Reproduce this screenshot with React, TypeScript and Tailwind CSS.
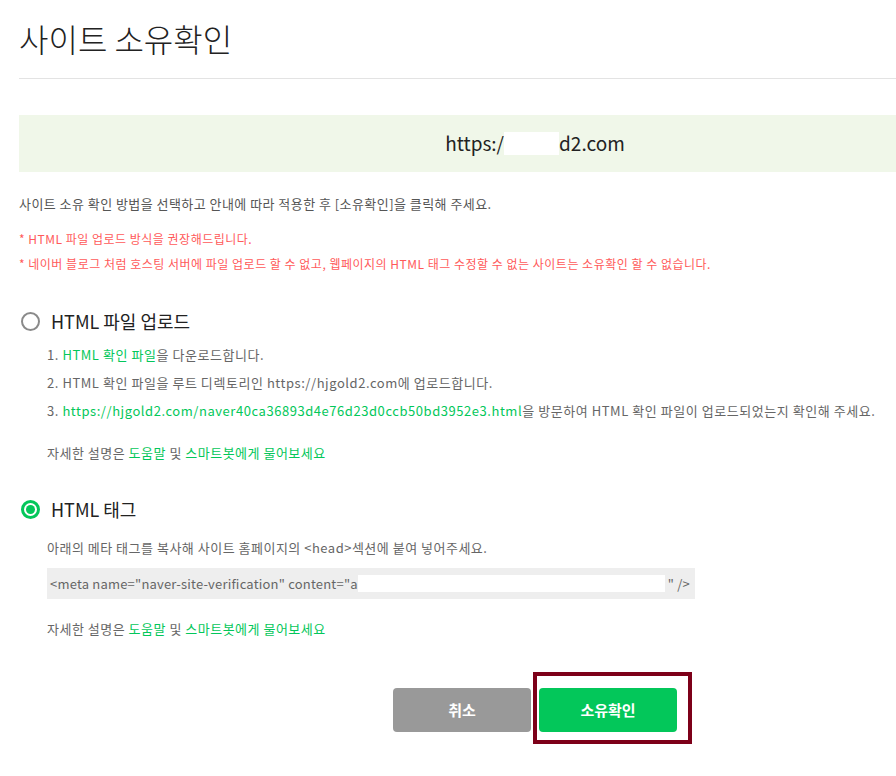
const green = "text-[#03c75a]"

function Radio({ checked }: { checked?: boolean }) {
  return checked ? (
    <span className="flex h-[19px] w-[19px] shrink-0 items-center justify-center rounded-full border-[3px] border-[#03c75a]">
      <span className="h-[9px] w-[9px] rounded-full bg-[#03c75a]" />
    </span>
  ) : (
    <span className="h-[19px] w-[19px] shrink-0 rounded-full border-2 border-[#8a8a8a]" />
  )
}

function HelpLine() {
  return (
    <p className="text-[13px] leading-[20px] tracking-[0.5px] text-[#666]">
      자세한 설명은 <span className={green}>도움말</span> 및{" "}
      <span className={green}>스마트봇에게 물어보세요</span>
    </p>
  )
}

export default function App() {
  return (
    <div className="h-[776px] w-[896px] overflow-hidden bg-white font-['Noto_Sans_CJK_KR','Noto_Sans',sans-serif]">
      <div className="ml-[19px] w-[1032px]">
        <h1 className="pt-[16px] text-[32px] font-light leading-[44px] text-[#222]">사이트 소유확인</h1>
        <div className="mt-[18px] border-t border-[#e3e3e3]" />

        <div className="mt-[36px] flex h-[57px] items-center justify-center bg-[#f0f7e9] text-[19px] text-[#222]">
          <span>https:/</span>
          <span className="inline-block h-[23px] w-[55px] bg-white" />
          <span>d2.com</span>
        </div>

        <p className="mt-[22px] text-[13px] leading-[20px] tracking-[0.45px] text-[#555]">
          사이트 소유 확인 방법을 선택하고 안내에 따라 적용한 후 [소유확인]을 클릭해 주세요.
        </p>
        <div className="mt-[15px] space-y-[5px] text-[12px] leading-[20px] tracking-[0.5px] text-[#ff5a5a]">
          <p>* HTML 파일 업로드 방식을 권장해드립니다.</p>
          <p>* 네이버 블로그 처럼 호스팅 서버에 파일 업로드 할 수 없고, 웹페이지의 HTML 태그 수정할 수 없는 사이트는 소유확인 할 수 없습니다.</p>
        </div>

        <section className="mt-[34px]">
          <label className="flex items-center gap-[11px] pl-[2px]">
            <Radio />
            <span className="text-[18px] leading-[26px] text-[#222]">HTML 파일 업로드</span>
          </label>
          <ol className="mt-[11px] space-y-[8px] pl-[28px] text-[13px] leading-[20px] tracking-[0.55px] text-[#666]">
            <li>
              1. <span className={green}>HTML 확인 파일</span>을 다운로드합니다.
            </li>
            <li>2. HTML 확인 파일을 루트 디렉토리인 https://hjgold2.com에 업로드합니다.</li>
            <li>
              3. <span className={green}>https://hjgold2.com/naver40ca36893d4e76d23d0ccb50bd3952e3.html</span>을 방문하여 HTML 확인 파일이 업로드되었는지 확인해 주세요.
            </li>
          </ol>
          <div className="mt-[22px] pl-[28px]">
            <HelpLine />
          </div>
        </section>

        <section className="mt-[33px]">
          <label className="flex items-center gap-[11px] pl-[2px]">
            <Radio checked />
            <span className="text-[18px] leading-[26px] text-[#222]">HTML 태그</span>
          </label>
          <div className="pl-[28px]">
            <p className="mt-[16px] text-[13px] leading-[20px] tracking-[0.5px] text-[#666]">
              아래의 메타 태그를 복사해 사이트 홈페이지의 &lt;head&gt;섹션에 붙여 넣어주세요.
            </p>
            <div className="mt-[10px] flex h-[31px] w-[648px] items-center whitespace-nowrap bg-[#eeeeee] pl-[3px] pr-[5px] text-[13px] tracking-[0.2px] text-[#666]">
              <span className="shrink-0">&lt;meta name="naver-site-verification" content="a</span>
              <span className="h-[17px] flex-1 bg-white" />
              <span className="ml-[3px] shrink-0">" /&gt;</span>
            </div>
            <div className="mt-[20px]">
              <HelpLine />
            </div>
          </div>
        </section>

        <div className="mt-[49px] flex justify-center gap-[8px]">
          <button className="h-[44px] w-[138px] rounded-[4px] bg-[#999999] text-[15px] font-bold text-white">취소</button>
          <div className="relative">
            <button className="h-[44px] w-[138px] rounded-[4px] bg-[#03c75a] text-[15px] font-bold text-white">소유확인</button>
            <div className="pointer-events-none absolute -top-[16px] -bottom-[12px] -left-[6px] -right-[15px] border-4 border-[#7d0019]" />
          </div>
        </div>
      </div>
    </div>
  )
}
